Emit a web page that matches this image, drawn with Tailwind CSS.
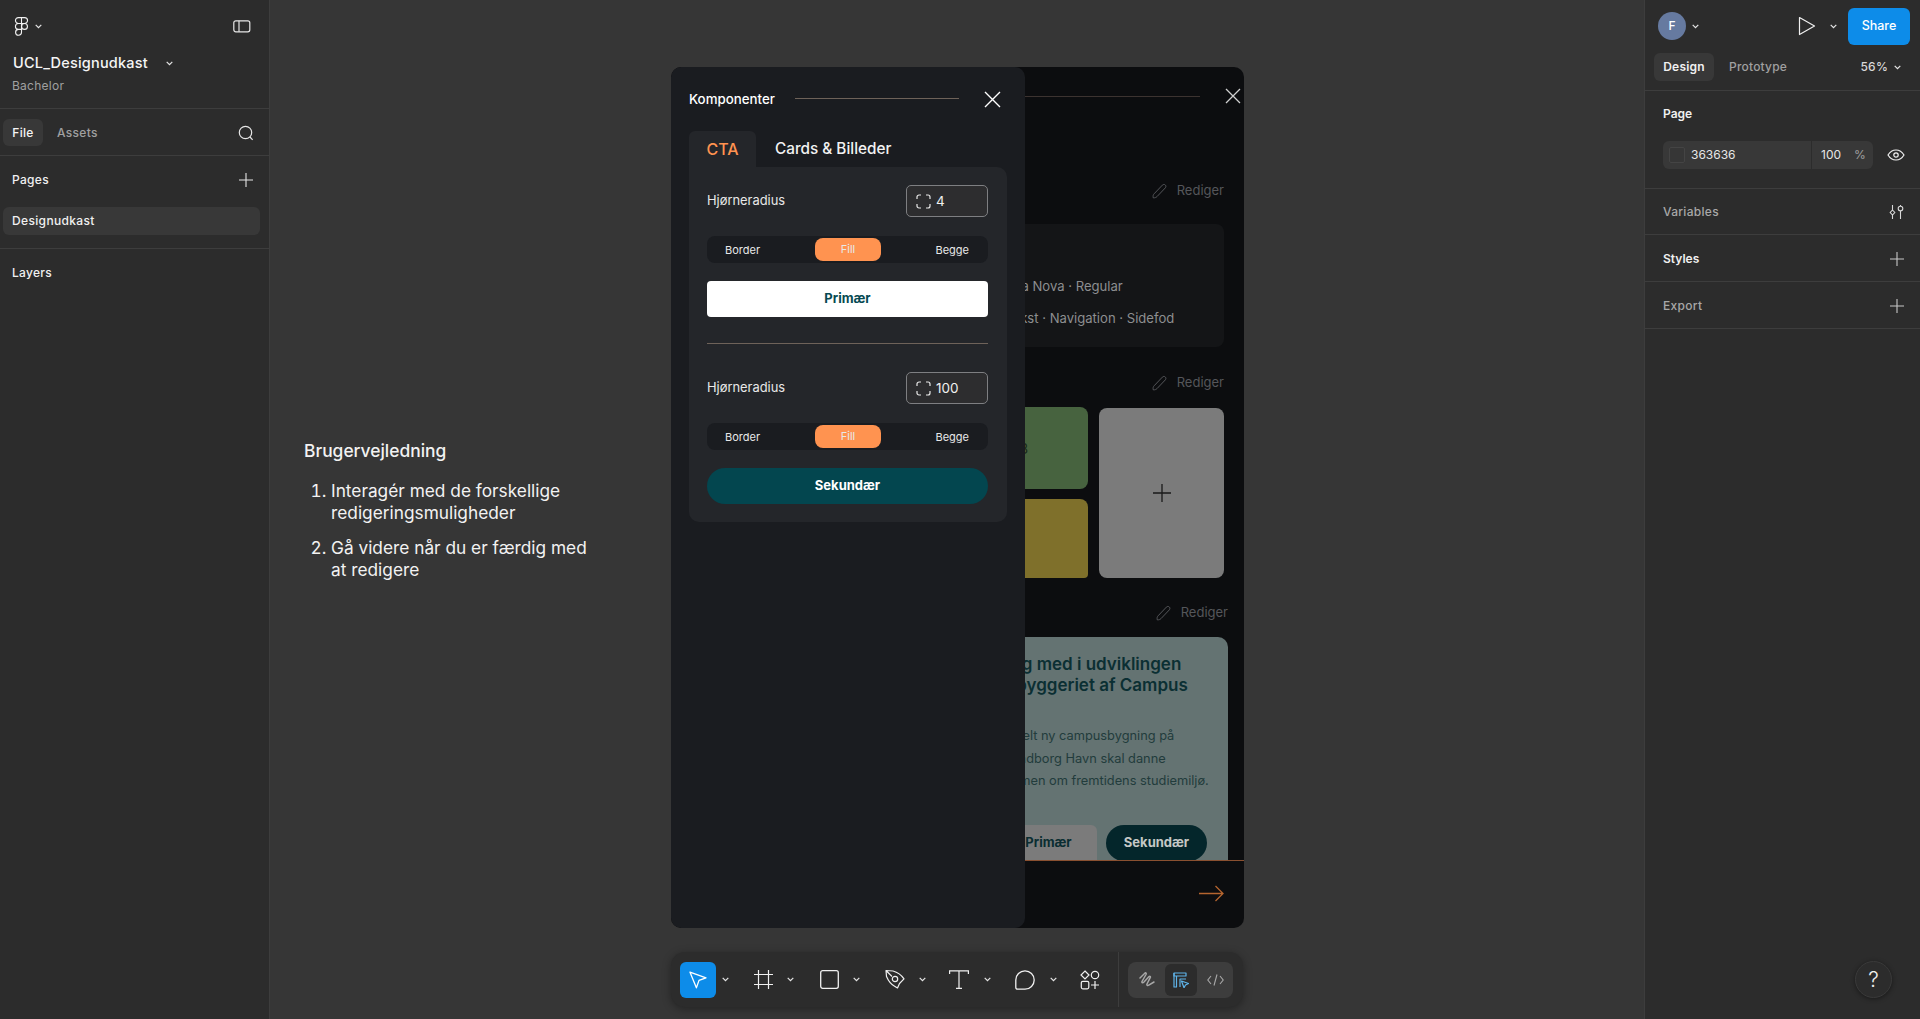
<!DOCTYPE html>
<html lang="en">
<head>
    <meta charset="UTF-8">
    <meta name="viewport" content="width=device-width, initial-scale=1.0">
    <title>UCL_Designudkast</title>
    <script src="https://cdn.jsdelivr.net/npm/@tailwindcss/browser@4"></script>
</head>
<body class="bg-[#363636] font-['Inter',sans-serif] overflow-hidden">
<div class="flex h-[1019px] w-[1920px]">

    <!-- left panel -->
    <aside class="w-[270px] shrink-0 bg-[#2c2c2c] border-r border-[#3d3d3d] text-white flex flex-col">
        <div class="h-[109px] shrink-0 border-b border-[#3d3d3d] px-[13px] pt-[17px]">
            <div class="flex items-center">
                <svg width="15" height="19" viewBox="0 0 15 19" fill="none" stroke="#f2f2f2" stroke-width="1.1" class="ml-[1px]"><path d="M7.5.6H4.4a2.95 2.95 0 0 0 0 5.9h3.1zM7.5.6h3.1a2.95 2.95 0 0 1 0 5.9H7.5zM7.5 6.5H4.4a2.95 2.95 0 0 0 0 5.9h3.1zM7.5 12.4H4.4a2.95 2.95 0 1 0 3.1 2.95z"/><circle cx="10.5" cy="9.45" r="2.95"/></svg>
                <svg width="7" height="5" viewBox="0 0 7 5" fill="none" stroke="#e6e6e6" stroke-width="1.2" class="ml-[6px]"><path d="M.7.8l2.8 2.8L6.3.8"/></svg>
                <svg width="18" height="13" viewBox="0 0 18 13" fill="none" stroke="#e6e6e6" stroke-width="1.2" class="ml-auto mr-[5px]"><rect x=".8" y=".8" width="16" height="11" rx="2"/><path d="M6 .8v11"/></svg>
            </div>
            <div class="flex items-center mt-[16px] h-[22px]">
                <span class="text-[14.5px] font-medium tracking-[0.2px] text-[#f5f5f5]">UCL_Designudkast</span>
                <svg width="7" height="5" viewBox="0 0 7 5" fill="none" stroke="#e6e6e6" stroke-width="1.2" class="ml-[18px]"><path d="M.7.8l2.8 2.8L6.3.8"/></svg>
            </div>
            <div class="text-[12px] tracking-[0.25px] text-[#a0a0a0] mt-[3px] -ml-[1px]">Bachelor</div>
        </div>
        <div class="h-[47px] shrink-0 border-b border-[#3d3d3d] flex items-center pl-[3px] pr-[15px] pt-px text-[12px] font-medium tracking-[0.3px]">
            <span class="h-[27px] w-[40px] rounded-[6px] bg-[#383838] flex items-center justify-center text-[#f5f5f5]">File</span>
            <span class="ml-[14px] text-[#a0a0a0]">Assets</span>
            <svg width="16" height="16" viewBox="0 0 16 16" fill="none" stroke="#e6e6e6" stroke-width="1.2" class="ml-auto"><circle cx="7.5" cy="7.5" r="6.2"/><path d="M12 12l2.6 2.8"/></svg>
        </div>
        <div class="h-[93px] shrink-0 border-b border-[#3d3d3d] px-[3px]">
            <div class="h-[47px] mb-[4px] flex items-center pl-[9px] pr-[13px] text-[12px] font-medium tracking-[0.3px] text-[#f0f0f0]">
                Pages
                <svg width="14" height="14" viewBox="0 0 14 14" fill="none" stroke="#e6e6e6" stroke-width="1.1" class="ml-auto"><path d="M7 0v14M0 7h14"/></svg>
            </div>
            <div class="h-[28px] w-[257px] rounded-[6px] bg-[#383838] flex items-center pl-[9px] text-[12px] font-medium tracking-[0.35px] text-[#f0f0f0]">Designudkast</div>
        </div>
        <div class="pl-[12px] pt-[15px] text-[12px] font-medium tracking-[0.3px] text-[#f0f0f0]">Layers</div>
    </aside>

    <!-- canvas -->
    <main class="relative flex-1 overflow-hidden bg-[#363636]">

        <div class="absolute left-[34px] top-[439px] w-[295px] text-[#f2f2f2] font-['Inter',sans-serif]">
            <h2 class="text-[17.4px] font-medium leading-[24px]">Brugervejledning</h2>
            <ol class="list-decimal pl-[27px] mt-[17px] text-[17.3px] leading-[22px] space-y-[13px]">
                <li>Interagér med de forskellige redigeringsmuligheder</li>
                <li>Gå videre når du er færdig med at redigere</li>
            </ol>
        </div>

        <!-- prototype frame -->
        <div class="absolute left-[401px] top-[67px] w-[573px] h-[861px] rounded-[10px] bg-[#0c0d0f] overflow-hidden flex flex-col">
            <div class="h-[60px] shrink-0 flex items-center pl-[353px] pr-[3px]">
                <div class="h-px flex-1 bg-[#3c3330] -mt-[2px]"></div>
                <svg width="16" height="16" viewBox="0 0 16 16" fill="none" stroke="#d0d0d0" stroke-width="1.3" class="ml-[25px] -mt-[2px]"><path d="M1 1l14 14M15 1L1 15"/></svg>
            </div>
            <div class="flex-1 pl-[305px] pr-[20px] min-h-0">
                <div class="mt-[54px] h-[20px] flex items-center justify-end gap-[9px] text-[13px] text-[#55565a]">
                    <svg width="16" height="16" viewBox="0 0 16 16" fill="none" stroke="#55565a" stroke-width="1"><path d="M1.2 14.8c-.3-2 0-3 .9-4l8.3-8.7c.9-.9 2.1-.9 2.9-.1.8.8.8 2 0 2.9L5 13.600c-1 .9-2 1.400-3.800 1.200z"/></svg>
                    Rediger
                </div>
                <div class="mt-[23px] h-[123px] rounded-[8px] bg-[#141517] overflow-hidden text-[13.1px] text-[#8d8e90] pl-[3px] pt-[52px] whitespace-nowrap">
                    <div class="leading-[20px]">Proxima Nova · Regular</div>
                    <div class="leading-[20px] mt-[12px]">Brødtekst · Navigation · Sidefod</div>
                </div>
                <div class="mt-[26px] h-[20px] flex items-center justify-end gap-[9px] text-[13px] text-[#55565a]">
                    <svg width="16" height="16" viewBox="0 0 16 16" fill="none" stroke="#55565a" stroke-width="1"><path d="M1.2 14.8c-.3-2 0-3 .9-4l8.3-8.7c.9-.9 2.1-.9 2.9-.1.8.8.8 2 0 2.9L5 13.600c-1 .9-2 1.400-3.800 1.200z"/></svg>
                    Rediger
                </div>
                <div class="mt-[14px] h-[171px] flex gap-[11px]">
                    <div class="flex-1 flex flex-col gap-[10px]">
                        <div class="h-[82px] rounded-[8px] bg-[#47633f] flex items-center pl-[17px] text-[14px] text-[#1b2a18] whitespace-nowrap">#5B8</div>
                        <div class="h-[79px] rounded-b-[4px] rounded-t-[8px] bg-[#7f702b] flex items-center pl-[17px] text-[14px] text-[#2c2710] whitespace-nowrap">#E5</div>
                    </div>
                    <div class="w-[125px] mt-px rounded-[8px] bg-[#7b7b7b] flex items-center justify-center">
                        <svg width="18" height="18" viewBox="0 0 18 18" fill="none" stroke="#1a1a1a" stroke-width="1.3"><path d="M9 0v18M0 9h18"/></svg>
                    </div>
                </div>
                <div class="mt-[25px] -mr-[4px] h-[20px] flex items-center justify-end gap-[9px] text-[13px] text-[#55565a]">
                    <svg width="16" height="16" viewBox="0 0 16 16" fill="none" stroke="#55565a" stroke-width="1"><path d="M1.2 14.8c-.3-2 0-3 .9-4l8.3-8.7c.9-.9 2.1-.9 2.9-.1.8.8.8 2 0 2.9L5 13.600c-1 .9-2 1.400-3.800 1.200z"/></svg>
                    Rediger
                </div>
                <div class="mt-[14px] -mr-[4px] h-[223px] rounded-t-[10px] bg-[#647372] overflow-hidden pl-[20px] whitespace-nowrap">
                    <div class="pt-[17px] text-[17px] font-semibold leading-[21px] text-[#0b2f33]">
                        <div class="ml-[6px]">Tag med i udviklingen</div>
                        <div>nybyggeriet af Campus</div>
                    </div>
                    <div class="mt-[29px] text-[12.8px] leading-[22.5px] text-[#223c3c]">
                        <div>En helt ny campusbygning på</div>
                        <div>Svendborg Havn skal danne</div>
                        <div>rammen om fremtidens studiemiljø.</div>
                    </div>
                    <div class="mt-[32px] flex gap-[9px] text-[13px] font-bold">
                        <span class="w-[101px] h-[36px] rounded-t-[6px] bg-[#7b7b7b] text-[#0a2d31] flex items-center justify-center pl-[4px]">Primær</span>
                        <span class="w-[101px] h-[36px] rounded-full bg-[#04262b] text-[#c4c8c6] flex items-center justify-center">Sekundær</span>
                    </div>
                </div>
            </div>
            <div class="h-[68px] shrink-0 border-t border-[#8a5030] flex justify-end pr-[20px] pt-[24px]">
                <svg width="25" height="17" viewBox="0 0 25 17" fill="none" stroke="#b5652f" stroke-width="1.3"><path d="M0 8.5h24M16.5 1l7.5 7.5L16.5 16"/></svg>
            </div>

            <!-- component panel -->
            <div class="absolute inset-y-0 left-0 w-[354px] rounded-[10px] bg-[#1a1c20] px-[18px] text-white">
                <div class="h-[64px] flex items-center">
                    <span class="text-[13.3px] font-medium pt-[2px]">Komponenter</span>
                    <div class="h-px w-[164px] bg-[#6e6259] ml-[20px] -mt-px"></div>
                    <svg width="17" height="17" viewBox="0 0 17 17" fill="none" stroke="#ffffff" stroke-width="1.4" class="ml-[25px]"><path d="M1 1l15 15M16 1L1 16"/></svg>
                </div>
                <div class="flex h-[36px] text-[16px] font-medium pt-px">
                    <span class="w-[67px] -mt-px rounded-t-[6px] bg-[#24262a] text-[#ff9350] flex items-center justify-center">CTA</span>
                    <span class="ml-[19px] flex items-center text-[15.3px] text-[#f2f2f2]">Cards &amp; Billeder</span>
                </div>
                <div class="w-[318px] h-[355px] rounded-[10px] rounded-tl-none bg-[#24262a] pl-[18px] pr-[19px] pt-[18px]">
                    <div class="flex items-center justify-between h-[32px]">
                        <span class="text-[12.9px] text-[#e8e8e8]">Hjørneradius</span>
                        <div class="w-[82px] h-[32px] rounded-[5px] border-[1.5px] border-[#7e7f82] bg-[#2d2d2f] flex items-center pl-[9px] gap-[5px] text-[13.5px] text-[#f0f0f0]">
                            <svg width="15" height="15" viewBox="0 0 15 15" fill="none" stroke="#e8e8e8" stroke-width="1.2"><path d="M1 5V3a2 2 0 0 1 2-2h2M10 1h2a2 2 0 0 1 2 2v2M14 10v2a2 2 0 0 1-2 2h-2M5 14H3a2 2 0 0 1-2-2v-2"/></svg>
                            4
                        </div>
                    </div>
                    <div class="mt-[19px] h-[27px] rounded-[8px] bg-[#1a1c20] flex items-center text-[11px] text-[#e8e8e8] pt-px">
                        <span class="w-[108px] pl-[18px]">Border</span>
                        <span class="w-[66px] h-[23px] -mt-px rounded-[8px] bg-[#ff9350] flex items-center justify-center">Fill</span>
                        <span class="ml-auto pr-[19px]">Begge</span>
                    </div>
                    <button class="block mt-[18px] w-full h-[36px] rounded-[4px] bg-white text-[#064a52] text-[13px] font-bold">Primær</button>
                    <div class="mt-[26px] h-[1px] bg-[#6e6259]"></div>
                    <div class="mt-[28px] flex items-center justify-between h-[32px]">
                        <span class="text-[12.9px] text-[#e8e8e8]">Hjørneradius</span>
                        <div class="w-[82px] h-[32px] rounded-[5px] border-[1.5px] border-[#7e7f82] bg-[#2d2d2f] flex items-center pl-[9px] gap-[5px] text-[13.5px] text-[#f0f0f0]">
                            <svg width="15" height="15" viewBox="0 0 15 15" fill="none" stroke="#e8e8e8" stroke-width="1.2"><path d="M1 5V3a2 2 0 0 1 2-2h2M10 1h2a2 2 0 0 1 2 2v2M14 10v2a2 2 0 0 1-2 2h-2M5 14H3a2 2 0 0 1-2-2v-2"/></svg>
                            100
                        </div>
                    </div>
                    <div class="mt-[19px] h-[27px] rounded-[8px] bg-[#1a1c20] flex items-center text-[11px] text-[#e8e8e8] pt-px">
                        <span class="w-[108px] pl-[18px]">Border</span>
                        <span class="w-[66px] h-[23px] -mt-px rounded-[8px] bg-[#ff9350] flex items-center justify-center">Fill</span>
                        <span class="ml-auto pr-[19px]">Begge</span>
                    </div>
                    <button class="block mt-[18px] w-full h-[36px] rounded-full bg-[#03464f] text-white text-[13px] font-bold">Sekundær</button>
                </div>
            </div>
        </div>

        <!-- toolbar -->
        <div class="absolute left-[401px] top-[952px] w-[572px] h-[55px] rounded-[14px] bg-[#2c2c2c] shadow-[0_2px_8px_rgba(0,0,0,0.35)] flex items-center pl-[9px]">
            <div class="w-[36px] h-[36px] rounded-[6px] bg-[#0d8ce9] flex items-center justify-center">
                <svg width="20" height="20" viewBox="0 0 20 20" fill="none" stroke="#ffffff" stroke-width="1.3" stroke-linejoin="round"><path d="M2 2.2l16 5.6-7 2.6-2.6 7.4z"/></svg>
            </div>
            <div class="w-[18px] flex justify-center mr-[11px]"><svg width="7" height="5" viewBox="0 0 7 5" fill="none" stroke="#e6e6e6" stroke-width="1.2"><path d="M.7.8l2.8 2.8L6.3.8"/></svg></div>
            <div class="w-[36px] flex justify-center">
                <svg width="19" height="19" viewBox="0 0 19 19" fill="none" stroke="#f0f0f0" stroke-width="1.2"><path d="M4.5 0v19M14.5 0v19M0 4.500h19M0 14.500h19"/></svg>
            </div>
            <div class="w-[18px] flex justify-center mr-[12px]"><svg width="7" height="5" viewBox="0 0 7 5" fill="none" stroke="#e6e6e6" stroke-width="1.2"><path d="M.7.8l2.8 2.8L6.3.8"/></svg></div>
            <div class="w-[36px] flex justify-center">
                <svg width="19" height="19" viewBox="0 0 19 19" fill="none" stroke="#f0f0f0" stroke-width="1.3"><rect x=".7" y=".7" width="17.6" height="17.6" rx="2"/></svg>
            </div>
            <div class="w-[18px] flex justify-center mr-[12px]"><svg width="7" height="5" viewBox="0 0 7 5" fill="none" stroke="#e6e6e6" stroke-width="1.2"><path d="M.7.8l2.8 2.8L6.3.8"/></svg></div>
            <div class="w-[36px] flex justify-center">
                <svg width="21" height="21" viewBox="0 0 21 21" fill="none" stroke="#f0f0f0" stroke-width="1.2" stroke-linejoin="round"><path d="M1 1.500l7 .5c3 .8 8 3.500 11 7.800l-4.500 4.700L12.500 19 10 17.500C6 15.500 3 11 1.500 7.500zM1 1.500l6 6"/><circle cx="10" cy="10" r="2.700"/></svg>
            </div>
            <div class="w-[18px] flex justify-center mr-[10px]"><svg width="7" height="5" viewBox="0 0 7 5" fill="none" stroke="#e6e6e6" stroke-width="1.2"><path d="M.7.8l2.8 2.8L6.3.8"/></svg></div>
            <div class="w-[36px] flex justify-center">
                <svg width="20" height="19" viewBox="0 0 20 19" fill="none" stroke="#f0f0f0" stroke-width="1.2"><path d="M.6 4V.8h18.800V4M10 .8v17.500M7 18.300h6"/></svg>
            </div>
            <div class="w-[20px] flex justify-center mr-[10px]"><svg width="7" height="5" viewBox="0 0 7 5" fill="none" stroke="#e6e6e6" stroke-width="1.2"><path d="M.7.8l2.8 2.8L6.3.8"/></svg></div>
            <div class="w-[36px] flex justify-center">
                <svg width="20" height="20" viewBox="0 0 20 20" fill="none" stroke="#f0f0f0" stroke-width="1.3"><path d="M10 .8a9.200 9.200 0 0 1 0 18.400H2.500A1.700 1.700 0 0 1 .8 17.500V10A9.200 9.200 0 0 1 10 .8z"/></svg>
            </div>
            <div class="w-[20px] flex justify-center mr-[9px]"><svg width="7" height="5" viewBox="0 0 7 5" fill="none" stroke="#e6e6e6" stroke-width="1.2"><path d="M.7.8l2.8 2.8L6.3.8"/></svg></div>
            <div class="w-[36px] flex justify-center">
                <svg width="20" height="20" viewBox="0 0 20 20" fill="none" stroke="#f0f0f0" stroke-width="1.2"><path d="M5 1l4 4-4 4-4-4z"/><circle cx="15" cy="5" r="3.700"/><rect x="1.300" y="11.300" width="7.500" height="7.500" rx="1.500"/><path d="M15 11v8M11 15h8"/></svg>
            </div>
            <div class="w-px h-[55px] bg-[#3d3d3d] ml-[10px]"></div>
            <div class="ml-[9px] w-[105px] h-[36px] rounded-[8px] bg-[#3d3d3d] flex items-center">
                <div class="w-[37px] flex justify-center">
                    <svg width="16" height="15" viewBox="0 0 16 15" fill="none" stroke="#a8a8a8" stroke-width="1.500" stroke-linecap="round"><path d="M1 6l5-5c1-.5 1.500.5 1 1.500L3 9.500c-.5 1.500 1 1.500 2 .5l5-5.500c1-.8 1.800.2 1.200 1.200L8 12c-.5 1.300.8 2 1.800 1L15 10"/></svg>
                </div>
                <div class="w-[32px] h-[32px] rounded-[6px] bg-[#2c2c2c] flex items-center justify-center">
                    <svg width="16" height="16" viewBox="0 0 16 16" fill="none" stroke="#5fb4ea" stroke-width="1.200" stroke-linejoin="round"><path d="M3.500 15V3.500M7 15V7h6M1 1h12v3H1z"/><path d="M1 1v14h3M8.500 9l7 2.500-3 1.500-1.500 2.800z"/></svg>
                </div>
                <div class="flex-1 flex justify-center">
                    <svg width="17" height="12" viewBox="0 0 17 12" fill="none" stroke="#a8a8a8" stroke-width="1.100"><path d="M4 2L.8 6 4 10M13 2l3.200 4L13 10M10 .5L7 11.500"/></svg>
                </div>
            </div>
        </div>
    </main>

    <!-- right panel -->
    <aside class="relative w-[276px] shrink-0 bg-[#2c2c2c] border-l border-[#3d3d3d] text-white flex flex-col">
        <div class="h-[91px] shrink-0 border-b border-[#3d3d3d]">
            <div class="h-[52px] flex items-center pl-[13px] pr-[10px]">
                <span class="w-[28px] h-[28px] rounded-full bg-[#667aa0] flex items-center justify-center text-[12px] font-medium">F</span>
                <svg width="7" height="5" viewBox="0 0 7 5" fill="none" stroke="#e6e6e6" stroke-width="1.2" class="ml-[6px]"><path d="M.7.8l2.8 2.8L6.3.8"/></svg>
                <svg width="18" height="20" viewBox="0 0 18 20" fill="none" stroke="#f0f0f0" stroke-width="1.2" stroke-linejoin="round" class="ml-auto"><path d="M1.500 1.500L16.500 10 1.500 18.500z"/></svg>
                <svg width="7" height="5" viewBox="0 0 7 5" fill="none" stroke="#e6e6e6" stroke-width="1.2" class="ml-[14px] mr-[11px]"><path d="M.7.8l2.8 2.8L6.3.8"/></svg>
                <span class="w-[62px] h-[37px] rounded-[6px] bg-[#0d8ce9] flex items-center justify-center text-[12.5px] font-medium">Share</span>
            </div>
            <div class="flex items-center h-[28px] pl-[9px] pr-[19px] mt-[1px] text-[12px] tracking-[0.2px]">
                <span class="w-[60px] h-[28px] rounded-[6px] bg-[#383838] flex items-center justify-center font-semibold text-[#f0f0f0]">Design</span>
                <span class="ml-[15px] text-[#a0a0a0] font-medium">Prototype</span>
                <span class="ml-auto text-[#d8d8d8] font-medium">56%</span>
                <svg width="7" height="5" viewBox="0 0 7 5" fill="none" stroke="#e6e6e6" stroke-width="1.2" class="ml-[6px]"><path d="M.7.8l2.8 2.8L6.3.8"/></svg>
            </div>
        </div>
        <div class="h-[98px] shrink-0 border-b border-[#3d3d3d] pl-[18px] pr-[15px] pt-[15px]">
            <div class="text-[12px] font-semibold text-[#f0f0f0] leading-[16px]">Page</div>
            <div class="flex items-center mt-[19px]">
                <div class="w-[210px] h-[28px] rounded-[6px] bg-[#383838] flex items-center pl-[6px] text-[12px] text-[#e6e6e6]">
                    <span class="w-[16px] h-[16px] rounded-[2px] bg-[#363636] border border-[#444444]"></span>
                    <span class="ml-[6px] w-[120px] h-[28px] flex items-center">363636</span>
                    <span class="w-px h-[28px] bg-[#2c2c2c]"></span>
                    <span class="ml-[9px]">100</span>
                    <span class="ml-[13px] text-[#a0a0a0]">%</span>
                </div>
                <svg width="18" height="12" viewBox="0 0 18 12" fill="none" stroke="#f0f0f0" stroke-width="1.200" class="ml-auto"><path d="M1 6c2-3.300 4.800-5 8-5s6 1.700 8 5c-2 3.300-4.800 5-8 5s-6-1.700-8-5z"/><circle cx="9" cy="6" r="2.200"/></svg>
            </div>
        </div>
        <div class="h-[46px] shrink-0 border-b border-[#3d3d3d] flex items-center pl-[18px] pr-[16px] text-[12px] font-medium tracking-[0.3px] text-[#a8a8a8]">
            Variables
            <svg width="15" height="14" viewBox="0 0 15 14" fill="none" stroke="#d8d8d8" stroke-width="1.100" class="ml-auto"><path d="M3.500 0v5M3.500 10v4M11.500 0v1M11.500 6v8"/><path d="M3.500 5l2.300 2.500-2.300 2.500-2.300-2.500z"/><circle cx="11.500" cy="3.500" r="2.300"/></svg>
        </div>
        <div class="h-[47px] shrink-0 border-b border-[#3d3d3d] flex items-center pl-[18px] pr-[16px] pt-px text-[12px] font-semibold text-[#f0f0f0]">
            Styles
            <svg width="14" height="14" viewBox="0 0 14 14" fill="none" stroke="#c8c8c8" stroke-width="1.100" class="ml-auto"><path d="M7 0v14M0 7h14"/></svg>
        </div>
        <div class="h-[47px] shrink-0 border-b border-[#3d3d3d] flex items-center pl-[18px] pr-[16px] pt-px text-[12px] font-medium tracking-[0.3px] text-[#a8a8a8]">
            Export
            <svg width="14" height="14" viewBox="0 0 14 14" fill="none" stroke="#c8c8c8" stroke-width="1.100" class="ml-auto"><path d="M7 0v14M0 7h14"/></svg>
        </div>

        <!-- help -->
        <div class="absolute right-[28px] bottom-[21px] w-[37px] h-[37px] rounded-full bg-[#2c2c2c] border border-[#3a3a3a] shadow-[0_1px_5px_rgba(0,0,0,0.45)] flex items-center justify-center text-[21px] font-light text-[#f0f0f0]">?</div>
    </aside>
</div>
</body>
</html>
